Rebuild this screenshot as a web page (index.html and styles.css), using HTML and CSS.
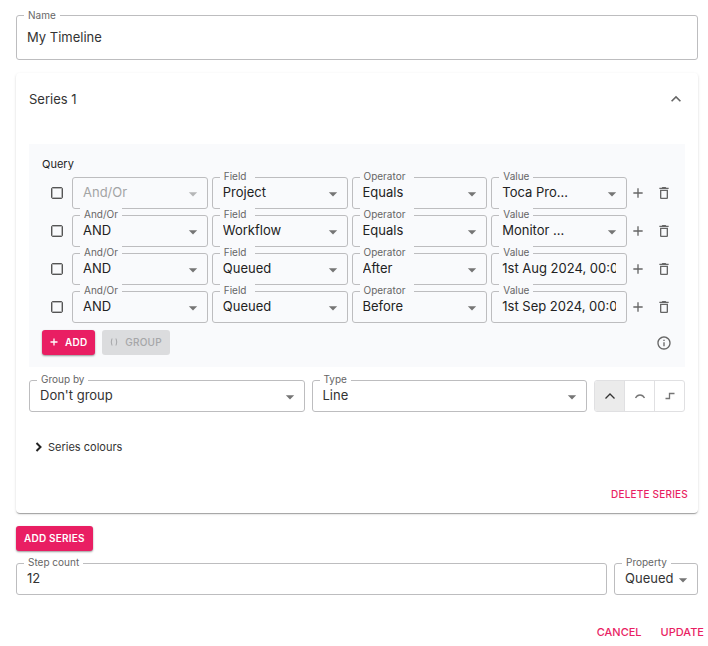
FILE: index.html
```html
<!DOCTYPE html>
<html lang="en">
<head>
<meta charset="utf-8">
<title>Timeline settings</title>
<link rel="stylesheet" href="styles.css">
</head>
<body>
<svg class="sprite" aria-hidden="true">
  <symbol id="drop" viewBox="0 0 24 24"><path d="M7 10l5 5 5-5z"/></symbol>
  <symbol id="plus" viewBox="0 0 24 24"><path d="M19 13h-6v6h-2v-6H5v-2h6V5h2v6h6z"/></symbol>
  <symbol id="trash" viewBox="0 0 24 24"><path d="M6 19c0 1.100.9 2 2 2h8c1.100 0 2-.9 2-2V7H6v12zM8 9h8v10H8V9zm7.500-5l-1-1h-5l-1 1H5v2h14V4h-3.500z"/></symbol>
</svg>
<form class="page">
  <div class="field field-tall">
    <label for="name">Name</label>
    <input id="name" type="text" value="My Timeline">
  </div>

  <section class="card">
    <header class="card-head">
      <h2>Series 1</h2>
      <button type="button" class="icon-btn" aria-label="Collapse"><svg class="i20" viewBox="0 0 24 24"><path d="M12 8l-6 6 1.410 1.410L12 10.830l4.590 4.580L18 14z"/></svg></button>
    </header>

    <div class="query">
      <h3>Query</h3>
      <div class="rows">
        <div class="row">
          <input type="checkbox" class="check" aria-label="Select rule 1">
          <div class="rule">
            <div class="field off"><select aria-label="And/Or" disabled><option>And/Or</option></select><svg class="drop"><use href="#drop"/></svg></div>
            <div class="field wide"><label for="f1">Field</label><select id="f1"><option>Project</option></select><svg class="drop"><use href="#drop"/></svg></div>
            <div class="field wide"><label for="o1">Operator</label><select id="o1"><option>Equals</option></select><svg class="drop"><use href="#drop"/></svg></div>
            <div class="field"><label for="v1">Value</label><select id="v1"><option>Toca Pro...</option></select><svg class="drop"><use href="#drop"/></svg></div>
          </div>
          <button type="button" class="icon-btn" aria-label="Add rule"><svg class="i16"><use href="#plus"/></svg></button>
          <button type="button" class="icon-btn" aria-label="Delete rule"><svg class="i16"><use href="#trash"/></svg></button>
        </div>
        <div class="row">
          <input type="checkbox" class="check" aria-label="Select rule 2">
          <div class="rule">
            <div class="field"><label for="a2">And/Or</label><select id="a2"><option>AND</option></select><svg class="drop"><use href="#drop"/></svg></div>
            <div class="field wide"><label for="f2">Field</label><select id="f2"><option>Workflow</option></select><svg class="drop"><use href="#drop"/></svg></div>
            <div class="field wide"><label for="o2">Operator</label><select id="o2"><option>Equals</option></select><svg class="drop"><use href="#drop"/></svg></div>
            <div class="field"><label for="v2">Value</label><select id="v2"><option>Monitor ...</option></select><svg class="drop"><use href="#drop"/></svg></div>
          </div>
          <button type="button" class="icon-btn" aria-label="Add rule"><svg class="i16"><use href="#plus"/></svg></button>
          <button type="button" class="icon-btn" aria-label="Delete rule"><svg class="i16"><use href="#trash"/></svg></button>
        </div>
        <div class="row">
          <input type="checkbox" class="check" aria-label="Select rule 3">
          <div class="rule">
            <div class="field"><label for="a3">And/Or</label><select id="a3"><option>AND</option></select><svg class="drop"><use href="#drop"/></svg></div>
            <div class="field wide"><label for="f3">Field</label><select id="f3"><option>Queued</option></select><svg class="drop"><use href="#drop"/></svg></div>
            <div class="field wide"><label for="o3">Operator</label><select id="o3"><option>After</option></select><svg class="drop"><use href="#drop"/></svg></div>
            <div class="field"><label for="v3">Value</label><input id="v3" type="text" value="1st Aug 2024, 00:00"></div>
          </div>
          <button type="button" class="icon-btn" aria-label="Add rule"><svg class="i16"><use href="#plus"/></svg></button>
          <button type="button" class="icon-btn" aria-label="Delete rule"><svg class="i16"><use href="#trash"/></svg></button>
        </div>
        <div class="row">
          <input type="checkbox" class="check" aria-label="Select rule 4">
          <div class="rule">
            <div class="field"><label for="a4">And/Or</label><select id="a4"><option>AND</option></select><svg class="drop"><use href="#drop"/></svg></div>
            <div class="field wide"><label for="f4">Field</label><select id="f4"><option>Queued</option></select><svg class="drop"><use href="#drop"/></svg></div>
            <div class="field wide"><label for="o4">Operator</label><select id="o4"><option>Before</option></select><svg class="drop"><use href="#drop"/></svg></div>
            <div class="field"><label for="v4">Value</label><input id="v4" type="text" value="1st Sep 2024, 00:00"></div>
          </div>
          <button type="button" class="icon-btn" aria-label="Add rule"><svg class="i16"><use href="#plus"/></svg></button>
          <button type="button" class="icon-btn" aria-label="Delete rule"><svg class="i16"><use href="#trash"/></svg></button>
        </div>
      </div>
      <div class="query-actions">
        <button type="button" class="btn btn-main"><svg viewBox="0 0 8 8"><path d="M4 .5v7M.5 4h7" class="line bold"/></svg>Add</button>
        <button type="button" class="btn btn-off" disabled><svg viewBox="0 0 8 8"><path d="M2 .5Q.5 4 2 7.500M6 .5Q7.500 4 6 7.500" class="line"/></svg>Group</button>
        <button type="button" class="icon-btn info" aria-label="Help"><svg class="i16" viewBox="0 0 24 24"><path d="M11 7h2v2h-2zm0 4h2v6h-2zm1-9C6.480 2 2 6.480 2 12s4.480 10 10 10 10-4.480 10-10S17.520 2 12 2zm0 18c-4.410 0-8-3.590-8-8s3.590-8 8-8 8 3.590 8 8-3.590 8-8 8z"/></svg></button>
      </div>
    </div>

    <div class="display">
      <div class="field"><label for="group">Group by</label><select id="group"><option>Don't group</option></select><svg class="drop"><use href="#drop"/></svg></div>
      <div class="field"><label for="type">Type</label><select id="type"><option>Line</option></select><svg class="drop"><use href="#drop"/></svg></div>
      <div class="toggles">
        <button type="button" class="on" aria-label="Straight" aria-pressed="true"><svg viewBox="0 0 12 12"><path d="M1.500 8.500L6 4l4.500 4.500" class="line bold"/></svg></button>
        <button type="button" aria-label="Curved"><svg viewBox="0 0 12 12"><path d="M1.500 8C3.500 4 8.500 4 10.500 8" class="line bold"/></svg></button>
        <button type="button" aria-label="Stepped"><svg viewBox="0 0 12 12"><path d="M1.500 8.500h4v-5h5" class="line bold"/></svg></button>
      </div>
    </div>

    <button type="button" class="colours"><svg viewBox="0 0 8 10"><path d="M1.500 1l4 4-4 4" class="line heavy"/></svg>Series colours</button>

    <div class="card-foot"><button type="button" class="text-btn small">Delete series</button></div>
  </section>

  <button type="button" class="btn btn-main add-series">Add series</button>

  <div class="bottom">
    <div class="field"><label for="steps">Step count</label><input id="steps" type="text" inputmode="numeric" value="12"></div>
    <div class="field property"><label for="prop">Property</label><select id="prop"><option>Queued</option></select><svg class="drop"><use href="#drop"/></svg></div>
  </div>

  <footer class="actions">
    <button type="button" class="text-btn">Cancel</button>
    <button type="submit" class="text-btn">Update</button>
  </footer>
</form>
</body>
</html>
```
FILE: styles.css
```css
* { box-sizing: border-box; }

body {
  margin: 0;
  background: #fff;
  color: #333;
  font-family: Inter, "Liberation Sans", sans-serif;
  font-size: 13px;
}

button, input, select { font: inherit; color: inherit; }
button { margin: 0; padding: 0; border: 0; background: none; cursor: pointer; }
h2, h3 { margin: 0; font-weight: 400; }
svg { display: block; flex: none; fill: currentColor; }
.sprite { position: absolute; width: 0; height: 0; }
.i16 { width: 16px; height: 16px; }
.i20 { width: 20px; height: 20px; }
.line { fill: none; stroke: currentColor; stroke-width: 1; }
.line.bold { stroke-width: 1.3; }
.line.heavy { stroke-width: 2; }

.page { padding: 15px 10px 0 16px; }

/* Outlined field with a label set into its top border */
.field {
  position: relative;
  min-width: 0;
  height: 32px;
  border: 1px solid #bdbdbf;
  border-radius: 3px;
}
.field-tall { height: 45px; }
.field label {
  position: absolute;
  top: -8px;
  left: 7px;
  padding: 0 4px;
  background: #fff;
  color: #666;
  font-size: 10px;
  line-height: 12px;
}
.field-tall label { top: -7px; }
.field.wide label { padding-right: 9px; }
.field input,
.field select {
  display: block;
  width: 100%;
  height: 100%;
  margin: 0;
  padding: 0 10px 2px;
  border: 0;
  outline: 0;
  background: none;
  appearance: none;
  font-size: 13px;
}
.drop {
  position: absolute;
  top: 6px;
  right: 4px;
  width: 20px;
  height: 20px;
  color: #757575;
  pointer-events: none;
}
.off select { color: #a3a4a5; opacity: 1; }
.off .drop { color: #b5b6b7; }

.card {
  margin-top: 13px;
  padding: 0 13px;
  border-radius: 4px;
  box-shadow: 0 2px 1px -1px rgba(0, 0, 0, .2), 0 1px 1px rgba(0, 0, 0, .14), 0 1px 3px rgba(0, 0, 0, .12);
}
.card-head {
  display: flex;
  align-items: center;
  justify-content: space-between;
  height: 51px;
  margin-right: -1px;
}
.card-head h2 { font-size: 13px; }
.icon-btn {
  display: flex;
  align-items: center;
  justify-content: center;
  width: 20px;
  height: 20px;
  color: #666;
}

.query {
  margin-top: 20px;
  padding: 12px 11px 12px 13px;
  background: #f9fafc;
  color: #222;
}
.query .field label { background: #f9fafc; }
.query h3 { font-size: 11px; line-height: 16px; }
.rows { display: grid; gap: 6px; margin-top: 5px; }
.row { display: flex; align-items: center; gap: 6px; }
.rule {
  display: grid;
  flex: 1;
  grid-template-columns: repeat(4, minmax(0, 1fr));
  gap: 4px;
  margin: 0 -5px 0 3px;
}
.check {
  width: 12px;
  height: 12px;
  margin: 0 0 0 9px;
  border: 1px solid #555;
  border-radius: 2px;
  box-shadow: inset 0 0 0 1px rgba(80, 80, 80, .4);
  appearance: none;
}

.query-actions { display: flex; align-items: center; gap: 7px; margin-top: 7px; }
.info { margin-left: auto; }

.btn {
  display: flex;
  align-items: center;
  gap: 7px;
  height: 25px;
  padding: 0 8px 1px;
  border-radius: 3px;
  font-size: 10px;
  font-weight: 500;
  letter-spacing: .02em;
  text-transform: uppercase;
}
.btn svg { width: 8px; height: 8px; }
.btn-main {
  background: #e91e63;
  color: #fff;
  font-weight: 600;
  box-shadow: 0 1px 2px rgba(0, 0, 0, .4);
}
.btn-off { background: #dbdcde; color: #a5a6a8; }

.display {
  display: grid;
  grid-template-columns: 1fr 1fr auto;
  gap: 7px;
  margin-top: 13px;
}
.toggles {
  display: flex;
  width: 91px;
  border: 1px solid #e0e0e2;
  border-radius: 3px;
  overflow: hidden;
}
.toggles button {
  display: flex;
  flex: 1;
  align-items: center;
  justify-content: center;
  color: #757575;
}
.toggles button + button { border-left: 1px solid #e0e0e2; }
.toggles .on { background: #ebebeb; color: #333; }
.toggles svg { width: 12px; height: 12px; }

.colours {
  display: flex;
  align-items: center;
  gap: 5px;
  height: 20px;
  margin: 25px 0 0 6px;
  font-size: 11px;
}
.colours svg { width: 8px; height: 10px; color: #222; }

.card-foot {
  display: flex;
  justify-content: flex-end;
  margin: 25px -3px 0 0;
  padding-bottom: 7px;
}
.text-btn {
  height: 24px;
  color: #e91e63;
  font-size: 11px;
  font-weight: 500;
  text-transform: uppercase;
}
.text-btn.small { font-size: 10px; letter-spacing: .02em; }

.add-series { margin-top: 13px; }

.bottom {
  display: grid;
  grid-template-columns: minmax(0, 1fr) 84px;
  gap: 7px;
  margin-top: 12px;
}

.actions {
  display: flex;
  justify-content: flex-end;
  gap: 19px;
  margin: 25px -6px 0 0;
}
```
